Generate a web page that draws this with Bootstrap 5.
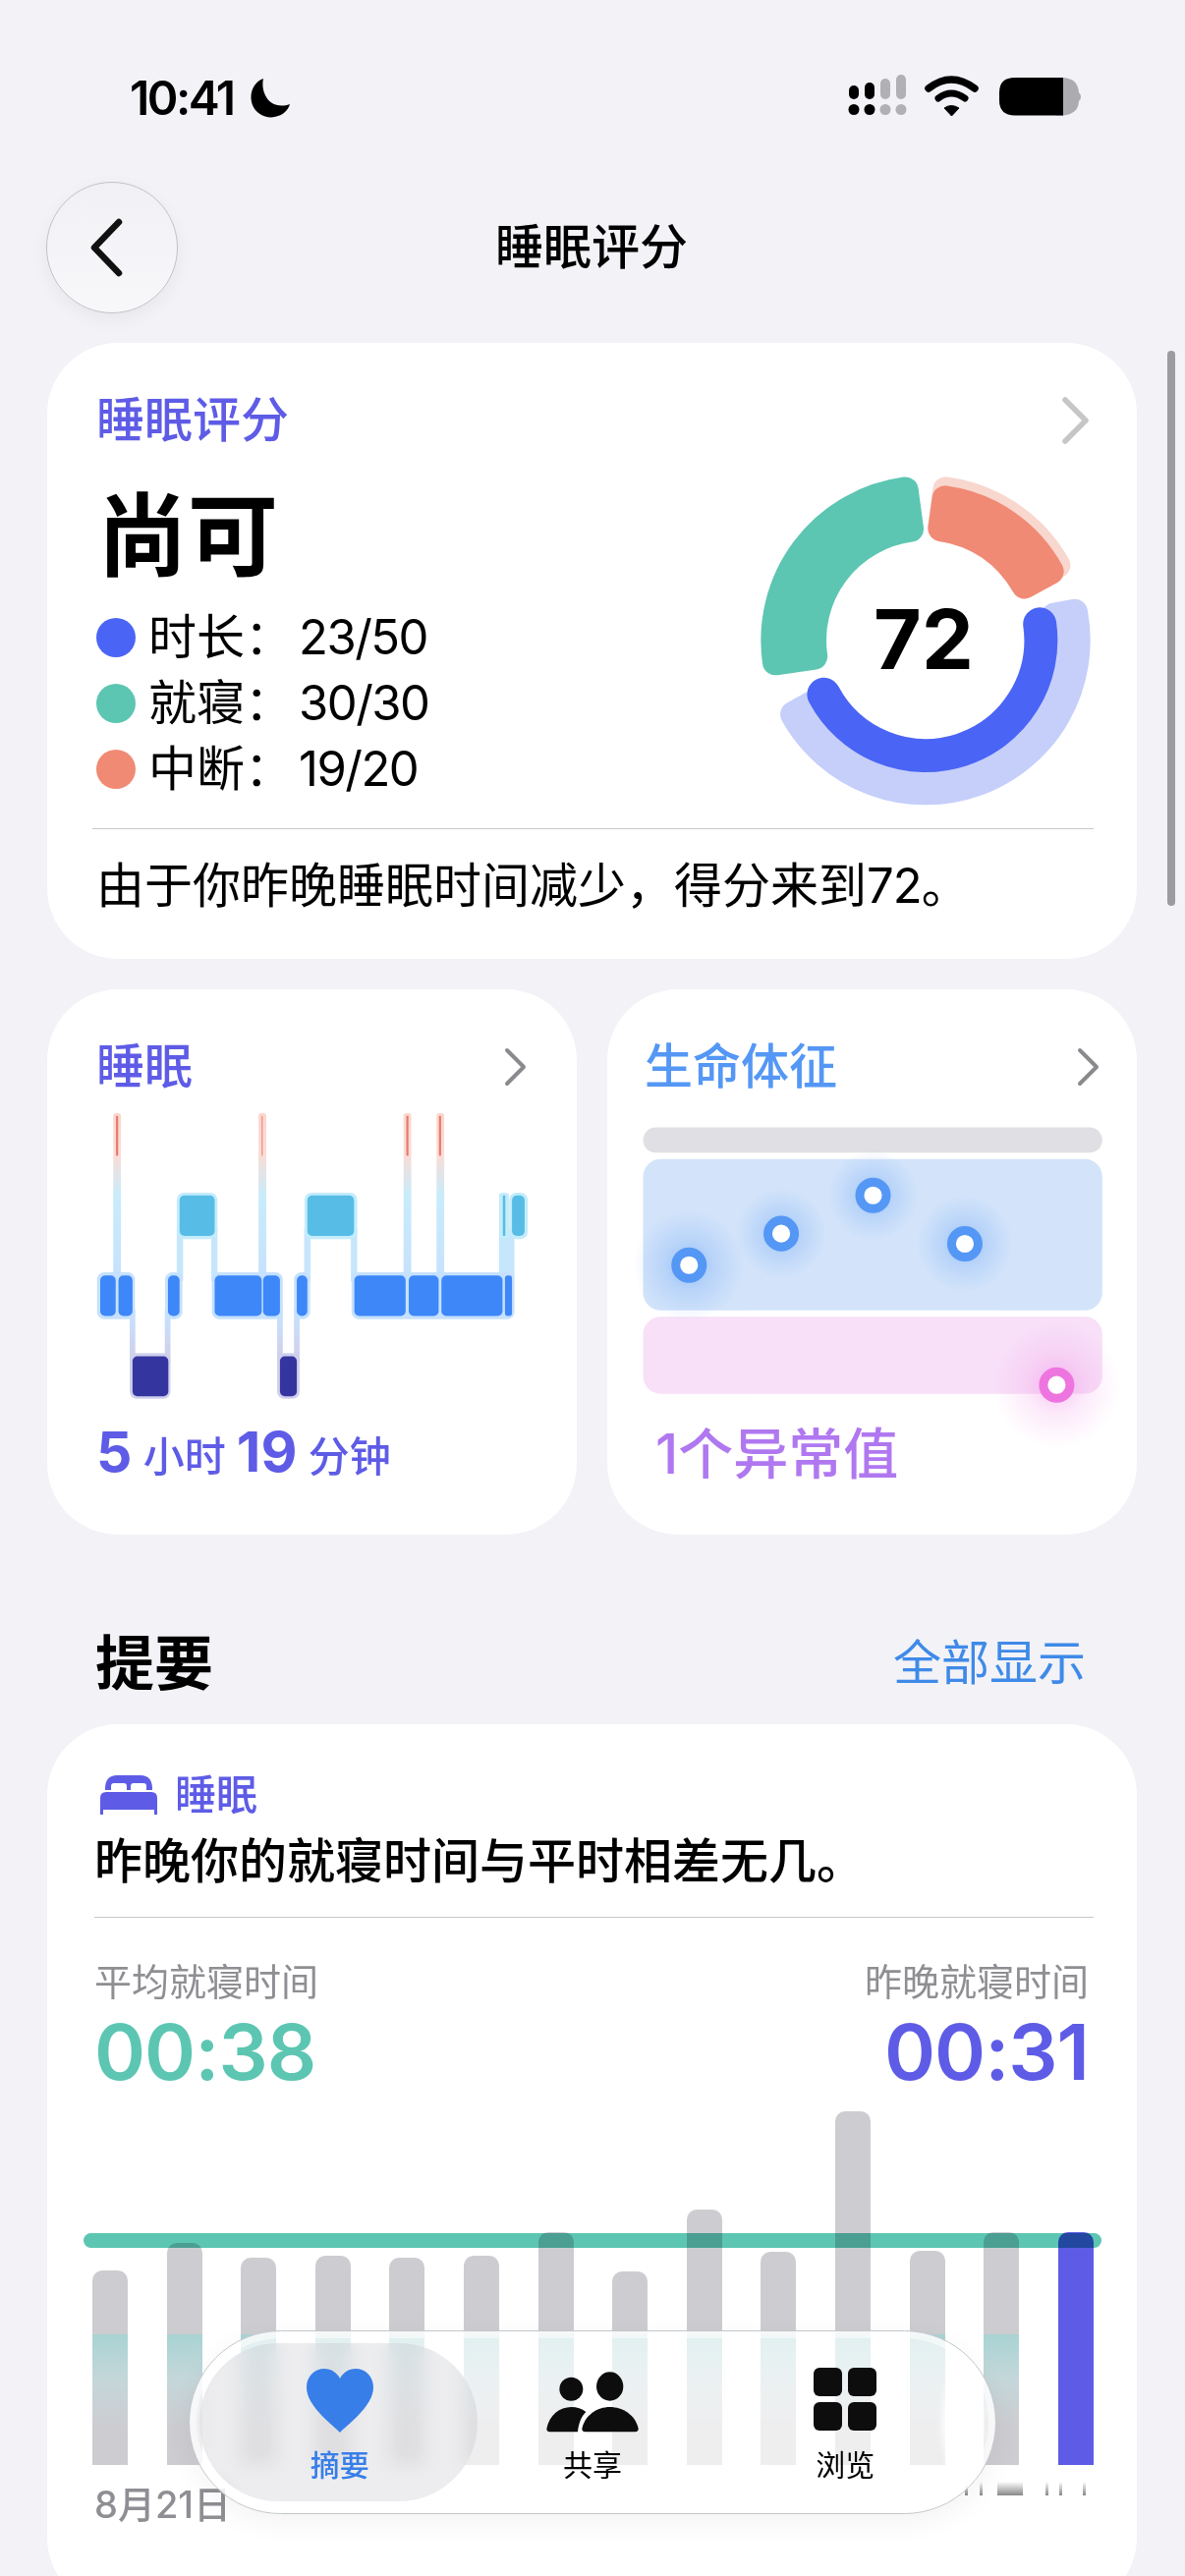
<!DOCTYPE html>
<html lang="zh-CN">
<head>
    <meta charset="UTF-8">
    <meta name="viewport" content="width=device-width, initial-scale=1.0">
    <title>睡眠评分</title>
    <link rel="stylesheet" href="https://cdn.jsdelivr.net/npm/bootstrap@5.3.0/dist/css/bootstrap.min.css">
    <script src="https://cdn.jsdelivr.net/npm/bootstrap@5.3.0/dist/js/bootstrap.bundle.min.js"></script>

    <style>
        body {
            margin: 0;
            width: 1206px;
            height: 2622px;
            overflow: hidden;
            position: relative;
            background-color: #f2f2f7;
            color: #000;
            font-family: Inter, "Noto Sans CJK SC", sans-serif;
            font-size: 49px;
            line-height: 60px;
        }

        .status-row { height: 80px; margin-top: 60px; padding: 0 86px 0 132px; }
        .status-time { font-size: 48px; font-weight: 600; letter-spacing: -2.5px; line-height: 80px; }

        .nav-row { height: 134px; margin-top: 45px; padding-left: 47px; position: relative; }
        .back-btn {
            width: 134px;
            height: 134px;
            border-radius: 50%;
            border: 1px solid #c2c2c6;
            background: linear-gradient(#f1f1f5, #f8f8fb);
            box-shadow: 0 6px 18px rgba(0, 0, 0, 0.05);
        }
        .nav-title { flex: 1; text-align: center; margin-left: -2px; padding-right: 181px; font-weight: 500; }
        .nav-title-inner { margin-left: 181px; }

        .page-main { padding: 30px 49px 0 48px; }
        .sheet { background: #fff; border: 0; border-radius: 72px; }
        .sheet-score { height: 627px; padding: 49px 47px 0 50px; }
        .tint-purple { color: #5e5ce6; }
        .tint-blue { color: #5497f5; }
        .txt-medium { font-weight: 500; }

        .verdict { font-size: 92px; line-height: 110px; font-weight: 700; margin-top: 33px; margin-left: 1px; }
        .legend-list { margin-top: 14px; }
        .legend-item { height: 67px; line-height: 67px; }
        .legend-dot { width: 40px; height: 40px; border-radius: 50%; margin-right: 13px; flex: none; }
        .legend-val { margin-left: 6px; letter-spacing: -1.5px; }
        .donut-box { width: 360px; height: 360px; margin: 13px -10px 0 0; position: relative; }
        .donut-num {
            position: absolute;
            left: 0;
            right: 0;
            top: 140px;
            text-align: center;
            font-size: 84px;
            line-height: 80px;
            font-weight: 700;
        }
        .thin-rule { height: 1px; background: #c8c8ca; margin: 0 -3px 0 -4px; }
        .score-note { margin-top: 28px; }
        .score-note span { letter-spacing: -1px; }

        .duo-row { gap: 31px; margin-top: 31px; }
        .sheet-half { width: 539px; height: 555px; padding-top: 49px; position: relative; }
        .sheet-sleep { padding-left: 50px; padding-right: 50px; }
        .sheet-vitals { padding-left: 38px; padding-right: 37px; }
        .sleep-chart { display: block; margin-top: 15px; margin-left: -1px; }
        .sleep-sum { margin-top: 17px; font-size: 42px; line-height: 70px; font-weight: 500; white-space: nowrap; }
        .sleep-sum b { font-size: 57px; font-weight: 700; }
        .vitals-chart { display: block; margin-top: 28px; margin-left: -10px; overflow: visible; }
        .vitals-sum { font-size: 56px; line-height: 70px; font-weight: 500; color: #b078f0; margin-left: 11px; margin-top: -20px; position: relative; }

        .sect-head { margin-top: 96px; padding: 0 52px 0 49px; height: 70px; align-items: center; }
        .sect-title { font-size: 60px; font-weight: 700; line-height: 70px; }
        .sect-link { color: #3f8ae8; }

        .sheet-digest { margin-top: 27px; height: 900px; padding: 44px 47px 0 48px; }
        .digest-tag { font-size: 42px; line-height: 56px; font-weight: 500; gap: 18px; margin-left: 6px; }
        .digest-line { margin-top: 10px; font-weight: 500; margin-bottom: 26px; }
        .digest-rule { margin: 0 -3px 0 0; }
        .stat-row { margin-top: 42px; padding-right: 2px; }
        .stat-label { font-size: 38px; line-height: 46px; color: #8e8e93; }
        .stat-value { font-size: 79px; line-height: 86px; font-weight: 600; letter-spacing: -1px; margin-top: 5px; }
        .tint-green { color: #5cc6b2; }

        .bar-chart { height: 360px; margin: 18px -3px 0 -2px; position: relative; }
        .bar-col {
            width: 36px;
            border-radius: 10px 10px 0 0;
            background: linear-gradient(#cdcdd1 0, #cdcdd1 2376px, #a9d3d3 2376px, #c4d7da 2420px, #cdcdd1 2470px) fixed;
        }
        .bar-now { background: #5e5ce6; }
        .goal-line {
            position: absolute;
            left: -9px;
            right: -8px;
            top: 124px;
            height: 15px;
            border-radius: 8px;
            background: #5cc6b2;
            mix-blend-mode: multiply;
        }
        .axis-row { margin-top: 17px; padding-right: 4px; }
        .axis-text { font-size: 38px; line-height: 46px; color: #8e8e93; font-weight: 500; }

        .scroll-thumb { position: absolute; left: 1188px; top: 357px; width: 8px; height: 565px; border-radius: 4px; background: #9c9ca0; }

        .tab-glass {
            position: absolute;
            left: 192px;
            top: 2372px;
            width: 822px;
            height: 187px;
            border-radius: 94px;
            border: 1.5px solid #c2c7ca;
            background: rgba(255, 255, 255, 0.66);
            box-shadow: 0 8px 28px rgba(0, 0, 0, 0.05), inset 0 0 0 7px rgba(255, 255, 255, 0.55);
            padding: 37px 24px 0;
        }
        .tab-pill {
            position: absolute;
            left: 10px;
            top: 12px;
            width: 283px;
            height: 161px;
            border-radius: 80px;
            background: rgba(118, 118, 128, 0.13);
            backdrop-filter: blur(9px);
        }
        .tab-shine {
            position: absolute;
            right: 13px;
            top: 39px;
            width: 42px;
            height: 108px;
            border-radius: 50%;
            background: rgba(255, 255, 255, 0.75);
            filter: blur(3px);
        }
        .tab-item { width: 258px; position: relative; text-align: center; font-size: 30px; line-height: 38px; }
        .tab-icon { height: 70px; margin-bottom: 10px; }
        .tab-on { color: #377ee8; font-weight: 500; }
    </style>
</head>
<body>
    <!-- status bar -->
    <div class="status-row d-flex justify-content-between align-items-center">
        <div class="d-flex align-items-center">
            <span class="status-time">10:41</span>
            <svg class="ms-3" width="42" height="42" viewBox="0 0 42 42"><path fill="#000" d="M14 1 C3 5 -1 18 3 28 C7 38 19 43 29 39 C35 37 39 33 41 27 C30 31 20 27 16 18 C13 12 13 6 14 1 Z"/></svg>
        </div>
        <svg width="280" height="80" viewBox="0 0 280 80">
            <g fill="#000">
                <rect x="24" y="27" width="10" height="14" rx="5"/><rect x="40" y="24" width="10" height="17" rx="5"/>
                <circle cx="29" cy="51.500" r="5.500"/><circle cx="45" cy="51.500" r="5.500"/>
            </g>
            <g fill="#b0b0b5">
                <rect x="56" y="20" width="10" height="21" rx="5"/><rect x="72" y="16" width="10" height="25" rx="5"/>
                <circle cx="61" cy="51.500" r="5.500"/><circle cx="77" cy="51.500" r="5.500"/>
            </g>
            <path d="M105 30 Q128 12 152 30" fill="none" stroke="#000" stroke-width="7.500" stroke-linecap="round"/>
            <path d="M115 40 Q128 30 142 40" fill="none" stroke="#000" stroke-width="7" stroke-linecap="round"/>
            <path d="M121 50 Q128 45 136 50 L128.500 58 Z" fill="#000" stroke="#000" stroke-linejoin="round"/>
            <path d="M235 19 H242 Q258 20 258 36 V42 Q258 56 242 57.500 H235 Z" fill="#ababb0"/>
            <path d="M193 19 H242 V57.500 H193 Q177 57.500 177 42 V34 Q177 19 193 19 Z" fill="#000"/>
            <path d="M254 32 Q260 34 260 38.500 Q260 43 254 45 Z" fill="#ababb0"/>
        </svg>
    </div>

    <!-- nav -->
    <div class="nav-row d-flex align-items-center">
        <div class="back-btn d-flex align-items-center justify-content-center flex-shrink-0">
            <svg width="40" height="62" viewBox="0 0 40 62" style="margin-right:10px"><path d="M33 5 L8 31 L33 57" transform="translate(-1 0)" fill="none" stroke="#111" stroke-width="6.500" stroke-linecap="round" stroke-linejoin="round"/></svg>
        </div>
        <div class="nav-title">睡眠评分</div>
    </div>

    <div class="page-main">
        <!-- score card -->
        <div class="card sheet sheet-score">
            <div class="d-flex justify-content-between align-items-center">
                <span class="tint-purple txt-medium">睡眠评分</span>
                <svg width="30" height="50" viewBox="0 0 30 50"><path d="M4 4 L25 25 L4 46" fill="none" stroke="#c6c6c8" stroke-width="5.500" stroke-linecap="round" stroke-linejoin="round"/></svg>
            </div>
            <div class="d-flex justify-content-between align-items-start">
                <div>
                    <div class="verdict">尚可</div>
                    <div class="legend-list">
                        <div class="legend-item d-flex align-items-center"><span class="legend-dot" style="background:#4a64f5"></span>时长：<span class="legend-val">23/50</span></div>
                        <div class="legend-item d-flex align-items-center"><span class="legend-dot" style="background:#5cc6b2"></span>就寝：<span class="legend-val">30/30</span></div>
                        <div class="legend-item d-flex align-items-center"><span class="legend-dot" style="background:#f08a74"></span>中断：<span class="legend-val">19/20</span></div>
                    </div>
                </div>
                <div class="donut-box">
                    <svg width="360" height="360" viewBox="0 0 1080 1080">
                        <path data-seg="305,503,2,66" fill="#f8d7ce"/>
                        <path data-seg="305,476,2,67" fill="#f08a74"/>
                        <path data-seg="360,503,74,246" fill="#c5cffa"/>
                        <path id="blueArc" fill="none" stroke="#4a64f5" stroke-width="102" stroke-linecap="round"/>
                        <path data-seg="303,503,256,358" fill="#5cc6b2"/>
                    </svg>
                    <div class="donut-num">72</div>
                </div>
            </div>
            <div class="thin-rule" style="margin-top:12px"></div>
            <div class="score-note">由于你昨晚睡眠时间减少，得分来到<span>72</span>。</div>
        </div>

        <!-- sleep + vitals -->
        <div class="duo-row d-flex">
            <div class="card sheet sheet-half sheet-sleep">
                <div class="d-flex justify-content-between align-items-center">
                    <span class="tint-purple txt-medium">睡眠</span>
                    <svg width="24" height="40" viewBox="0 0 24 40"><path d="M3 3 L20 20 L3 37" fill="none" stroke="#8a8a8e" stroke-width="4" stroke-linecap="round" stroke-linejoin="round"/></svg>
                </div>
                <svg class="sleep-chart" width="443" height="295" viewBox="160 365 1240 825">
                    <defs>
                        <linearGradient id="wakeFade" gradientUnits="userSpaceOnUse" x1="0" y1="370" x2="0" y2="840">
                            <stop offset="0" stop-color="#fbd6cf"/><stop offset=".25" stop-color="#fbdcd6"/><stop offset=".5" stop-color="#c8ecfb"/><stop offset="1" stop-color="#c6e1fd"/>
                        </linearGradient>
                        <linearGradient id="deepFade" gradientUnits="userSpaceOnUse" x1="0" y1="948" x2="0" y2="1062">
                            <stop offset="0" stop-color="#c6e1fd"/><stop offset="1" stop-color="#cfd0ec"/>
                        </linearGradient>
                    </defs>
                    <!-- connectors -->
                    <g fill="url(#wakeFade)">
                        <rect x="211" y="370" width="22" height="480" rx="8"/><rect x="625" y="370" width="22" height="480" rx="8"/>
                        <rect x="1038" y="370" width="22" height="480" rx="8"/><rect x="1132" y="370" width="22" height="480" rx="8"/>
                    </g>
                    <g fill="#c6e6fc">
                        <rect x="392" y="700" width="18" height="150"/><rect x="490" y="700" width="18" height="150"/>
                        <rect x="755" y="700" width="18" height="150"/><rect x="888" y="700" width="18" height="150"/>
                        <rect x="1310" y="600" width="28" height="250"/><rect x="1336" y="700" width="18" height="150"/>
                    </g>
                    <g fill="url(#deepFade)">
                        <rect x="258" y="930" width="16" height="150"/><rect x="358" y="930" width="16" height="150"/>
                        <rect x="678" y="930" width="16" height="150"/><rect x="726" y="930" width="16" height="150"/>
                    </g>
                    <!-- halos -->
                    <g fill="#c6e1fd">
                        <rect x="165" y="824" width="108" height="133" rx="20"/><rect x="359" y="824" width="49" height="133" rx="20"/>
                        <rect x="492" y="824" width="202" height="133" rx="20"/><rect x="726" y="824" width="46" height="133" rx="20"/>
                        <rect x="890" y="824" width="464" height="133" rx="20"/>
                    </g>
                    <g fill="#c4ecfb">
                        <rect x="392" y="597" width="116" height="132" rx="20"/><rect x="756" y="597" width="150" height="132" rx="20"/>
                        <rect x="1311" y="597" width="26" height="132" rx="10"/><rect x="1339" y="597" width="53" height="132" rx="20"/>
                    </g>
                    <g fill="#cfd0ec">
                        <rect x="258" y="1054" width="116" height="130" rx="20"/><rect x="678" y="1054" width="64" height="130" rx="20"/>
                    </g>
                    <!-- stages -->
                    <g fill="#3d87f8">
                        <rect x="174" y="833" width="44" height="115" rx="14"/><rect x="226" y="833" width="40" height="115" rx="14"/>
                        <rect x="367" y="833" width="33" height="115" rx="14"/><rect x="500" y="833" width="134" height="115" rx="14"/>
                        <rect x="638" y="833" width="48" height="115" rx="14"/><rect x="734" y="833" width="30" height="115" rx="14"/>
                        <rect x="898" y="833" width="146" height="115" rx="14"/><rect x="1053" y="833" width="85" height="115" rx="14"/>
                        <rect x="1146" y="833" width="174" height="115" rx="14"/><rect x="1327" y="833" width="20" height="115" rx="8"/>
                    </g>
                    <g fill="#57bde6">
                        <rect x="400" y="605" width="100" height="115" rx="14"/><rect x="764" y="605" width="133" height="115" rx="14"/>
                        <rect x="1321" y="605" width="7" height="115" rx="2"/><rect x="1347" y="605" width="36" height="115" rx="14"/>
                    </g>
                    <g fill="#3535a0">
                        <rect x="266" y="1063" width="102" height="114" rx="14"/><rect x="686" y="1063" width="48" height="114" rx="14"/>
                    </g>
                    <g fill="#e6796a">
                        <rect x="219" y="378" width="6" height="114" rx="2"/><rect x="1046" y="378" width="6" height="114" rx="2"/>
                        <rect x="1139" y="378" width="6" height="114" rx="2"/>
                    </g>
                    <rect x="633" y="378" width="4" height="114" rx="2" fill="#f09a8c"/>
                </svg>
                <div class="sleep-sum tint-purple"><b>5</b> 小时 <b>19</b> 分钟</div>
            </div>

            <div class="card sheet sheet-half sheet-vitals">
                <div class="d-flex justify-content-between align-items-center">
                    <span class="tint-blue txt-medium">生命体征</span>
                    <svg width="24" height="40" viewBox="0 0 24 40"><path d="M3 3 L20 20 L3 37" fill="none" stroke="#8a8a8e" stroke-width="4" stroke-linecap="round" stroke-linejoin="round"/></svg>
                </div>
                <svg class="vitals-chart" width="500" height="321" viewBox="100 400 1400 900">
                    <defs>
                        <radialGradient id="glowBlue"><stop offset="0" stop-color="#5497f5" stop-opacity=".5"/><stop offset=".45" stop-color="#5497f5" stop-opacity=".2"/><stop offset="1" stop-color="#5497f5" stop-opacity="0"/></radialGradient>
                        <radialGradient id="glowPink"><stop offset="0" stop-color="#ee75e0" stop-opacity=".4"/><stop offset=".5" stop-color="#ee75e0" stop-opacity=".14"/><stop offset="1" stop-color="#ee75e0" stop-opacity="0"/></radialGradient>
                    </defs>
                    <rect x="123" y="410" width="1310" height="72" rx="36" fill="#e0e0e4"/>
                    <rect x="123" y="500" width="1310" height="432" rx="50" fill="#d3e4fa"/>
                    <rect x="123" y="950" width="1310" height="220" rx="50" fill="#f8e0f8"/>
                    <circle cx="254" cy="803" r="160" fill="url(#glowBlue)"/>
                    <circle cx="517" cy="713" r="130" fill="url(#glowBlue)"/>
                    <circle cx="779" cy="604" r="130" fill="url(#glowBlue)"/>
                    <circle cx="1041" cy="742" r="140" fill="url(#glowBlue)"/>
                    <circle cx="1303" cy="1145" r="180" fill="url(#glowPink)"/>
                    <g fill="#fff" stroke="#5497f5" stroke-width="25">
                        <circle cx="254" cy="803" r="38"/><circle cx="517" cy="713" r="38"/>
                        <circle cx="779" cy="604" r="38"/><circle cx="1041" cy="742" r="38"/>
                    </g>
                    <circle cx="1303" cy="1145" r="38" fill="#fff" stroke="#ee75e0" stroke-width="25"/>
                </svg>
                <div class="vitals-sum">1个异常值</div>
            </div>
        </div>

        <!-- highlights -->
        <div class="sect-head d-flex justify-content-between">
            <span class="sect-title">提要</span>
            <span class="sect-link">全部显示</span>
        </div>
        <div class="card sheet sheet-digest">
            <div class="digest-tag d-flex align-items-center tint-purple">
                <svg width="58" height="40" viewBox="0 0 58 40">
                    <path fill="#5e5ce6" d="M5 14 Q5 0 17 0 H41 Q53 0 53 14 V15 H5 Z"/>
                    <rect x="11" y="8" width="16" height="9" rx="3" fill="#fff"/><rect x="31" y="8" width="16" height="9" rx="3" fill="#fff"/>
                    <path fill="#5e5ce6" d="M0 23 Q0 17 6 17 H52 Q58 17 58 23 V40 H55 V35 H3 V40 H0 Z"/>
                </svg>
                <span>睡眠</span>
            </div>
            <div class="digest-line">昨晚你的就寝时间与平时相差无几。</div>
            <div class="thin-rule digest-rule"></div>
            <div class="stat-row d-flex justify-content-between">
                <div>
                    <div class="stat-label">平均就寝时间</div>
                    <div class="stat-value tint-green">00:38</div>
                </div>
                <div class="text-end">
                    <div class="stat-label">昨晚就寝时间</div>
                    <div class="stat-value tint-purple">00:31</div>
                </div>
            </div>
            <div id="barChart" class="bar-chart d-flex justify-content-between align-items-end">
                <div class="goal-line"></div>
            </div>
            <div class="axis-row d-flex justify-content-between align-items-start">
                <span class="axis-text">8月21日</span>
                <svg width="124" height="14" viewBox="0 0 124 14">
                    <defs><linearGradient id="axisFade" x1="0" y1="0" x2="0" y2="1"><stop offset="0" stop-color="#fff"/><stop offset="1" stop-color="#888"/></linearGradient></defs>
                    <g fill="url(#axisFade)">
                        <rect x="0" y="0" width="3" height="14"/><rect x="15" y="0" width="3" height="14"/><rect x="33" y="0" width="26" height="14"/>
                        <rect x="82" y="0" width="3" height="14"/><rect x="96" y="0" width="3" height="14"/><rect x="120" y="0" width="3" height="14"/>
                    </g>
                </svg>
            </div>
        </div>
    </div>

    <div class="scroll-thumb"></div>

    <!-- floating tab bar -->
    <div class="tab-glass d-flex">
        <div class="tab-pill"></div>
        <div class="tab-shine"></div>
        <div class="tab-item tab-on">
            <div class="tab-icon">
                <svg width="70" height="66" viewBox="0 0 70 66"><path fill="#377ee8" d="M35 66 C30 60 1 40 1 20 C1 8 10 1 19 1 C26 1 32 5 35 11 C38 5 44 1 51 1 C60 1 69 8 69 20 C69 40 40 60 35 66 Z"/></svg>
            </div>
            摘要
        </div>
        <div class="tab-item">
            <div class="tab-icon">
                <svg width="100" height="70" viewBox="40 150 300 210">
                    <g fill="#0d0d0d">
                        <circle cx="125" cy="215" r="36"/>
                        <ellipse cx="243" cy="207" rx="41" ry="44"/>
                        <path d="M50 336 C58 295 90 270 125 270 C142 270 158 275 170 285 C155 300 148 320 145 346 H60 Q50 346 50 336 Z"/>
                        <path d="M158 336 C166 295 205 270 243 270 C282 270 322 295 330 336 Q330 346 320 346 H168 Q158 346 158 336 Z"/>
                    </g>
                </svg>
            </div>
            共享
        </div>
        <div class="tab-item">
            <div class="tab-icon">
                <svg width="64" height="64" viewBox="0 0 64 64">
                    <g fill="#0d0d0d">
                        <rect x="0" y="0" width="29" height="29" rx="6"/><rect x="35" y="0" width="29" height="29" rx="6"/>
                        <rect x="0" y="35" width="29" height="29" rx="6"/><rect x="35" y="35" width="29" height="29" rx="6"/>
                    </g>
                </svg>
            </div>
            浏览
        </div>
    </div>

    <script>
        // donut segments, angles clockwise from 12 o'clock, in the svg's 1080 box
        const CX = 546, CY = 542;

        function pt(r, deg) {
            const a = deg * Math.PI / 180;
            return (CX + r * Math.sin(a)).toFixed(1) + ' ' + (CY - r * Math.cos(a)).toFixed(1);
        }

        document.querySelectorAll('[data-seg]').forEach(function (el) {
            const [r1, r2, a0, a1] = el.dataset.seg.split(',').map(Number);
            const c = 40; // corner radius
            const ri = r1 + c, ro = r2 - c;
            const dA = c / ((ri + ro) / 2) * 180 / Math.PI;
            const s = a0 + dA, e = a1 - dA;
            const big = e - s > 180 ? 1 : 0;
            el.setAttribute('d', 'M' + pt(ro, s) + ' A' + ro + ' ' + ro + ' 0 ' + big + ' 1 ' + pt(ro, e) +
                ' L' + pt(ri, e) + ' A' + ri + ' ' + ri + ' 0 ' + big + ' 0 ' + pt(ri, s) + ' Z');
            el.setAttribute('stroke', el.getAttribute('fill'));
            el.setAttribute('stroke-width', c * 2);
            el.setAttribute('stroke-linejoin', 'round');
        });
        document.getElementById('blueArc').setAttribute('d', 'M' + pt(352, 82) + ' A352 352 0 0 1 ' + pt(352, 242));

        // bed-time bars: top edge of each one in page pixels, baseline at 2589
        const tops = [2391, 2363, 2378, 2376, 2378, 2376, 2352, 2392, 2329, 2372, 2229, 2371, 2352, 2352];
        const chart = document.getElementById('barChart');
        const goal = chart.querySelector('.goal-line');
        tops.forEach(function (top, i) {
            const bar = document.createElement('div');
            bar.className = 'bar-col' + (i === tops.length - 1 ? ' bar-now' : '');
            bar.style.height = (2589 - top) + 'px';
            chart.insertBefore(bar, goal);
        });
    </script>
</body>
</html>
